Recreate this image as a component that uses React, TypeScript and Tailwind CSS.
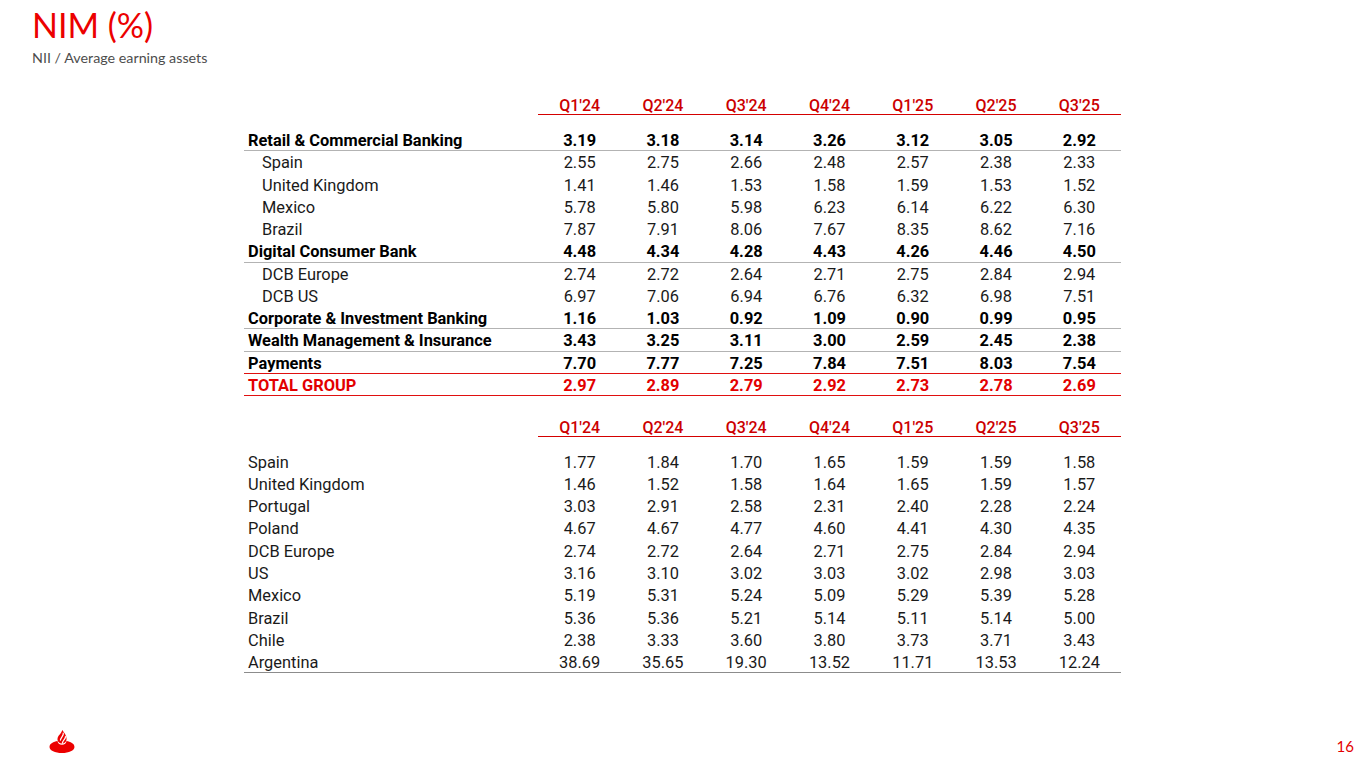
import React from "react";

type Row = { label: string; vals: string[]; kind: "bold" | "sub" | "total" | "plain"; line?: "gray" | "red" | "dark" };

const q = ["Q1'24", "Q2'24", "Q3'24", "Q4'24", "Q1'25", "Q2'25", "Q3'25"];

const t1: Row[] = [
  { label: "Retail & Commercial Banking", vals: ["3.19", "3.18", "3.14", "3.26", "3.12", "3.05", "2.92"], kind: "bold", line: "gray" },
  { label: "Spain", vals: ["2.55", "2.75", "2.66", "2.48", "2.57", "2.38", "2.33"], kind: "sub" },
  { label: "United Kingdom", vals: ["1.41", "1.46", "1.53", "1.58", "1.59", "1.53", "1.52"], kind: "sub" },
  { label: "Mexico", vals: ["5.78", "5.80", "5.98", "6.23", "6.14", "6.22", "6.30"], kind: "sub" },
  { label: "Brazil", vals: ["7.87", "7.91", "8.06", "7.67", "8.35", "8.62", "7.16"], kind: "sub" },
  { label: "Digital Consumer Bank", vals: ["4.48", "4.34", "4.28", "4.43", "4.26", "4.46", "4.50"], kind: "bold", line: "gray" },
  { label: "DCB Europe", vals: ["2.74", "2.72", "2.64", "2.71", "2.75", "2.84", "2.94"], kind: "sub" },
  { label: "DCB US", vals: ["6.97", "7.06", "6.94", "6.76", "6.32", "6.98", "7.51"], kind: "sub" },
  { label: "Corporate & Investment Banking", vals: ["1.16", "1.03", "0.92", "1.09", "0.90", "0.99", "0.95"], kind: "bold", line: "gray" },
  { label: "Wealth Management & Insurance", vals: ["3.43", "3.25", "3.11", "3.00", "2.59", "2.45", "2.38"], kind: "bold", line: "gray" },
  { label: "Payments", vals: ["7.70", "7.77", "7.25", "7.84", "7.51", "8.03", "7.54"], kind: "bold", line: "red" },
  { label: "TOTAL GROUP", vals: ["2.97", "2.89", "2.79", "2.92", "2.73", "2.78", "2.69"], kind: "total", line: "red" },
];

const t2: Row[] = [
  { label: "Spain", vals: ["1.77", "1.84", "1.70", "1.65", "1.59", "1.59", "1.58"], kind: "plain" },
  { label: "United Kingdom", vals: ["1.46", "1.52", "1.58", "1.64", "1.65", "1.59", "1.57"], kind: "plain" },
  { label: "Portugal", vals: ["3.03", "2.91", "2.58", "2.31", "2.40", "2.28", "2.24"], kind: "plain" },
  { label: "Poland", vals: ["4.67", "4.67", "4.77", "4.60", "4.41", "4.30", "4.35"], kind: "plain" },
  { label: "DCB Europe", vals: ["2.74", "2.72", "2.64", "2.71", "2.75", "2.84", "2.94"], kind: "plain" },
  { label: "US", vals: ["3.16", "3.10", "3.02", "3.03", "3.02", "2.98", "3.03"], kind: "plain" },
  { label: "Mexico", vals: ["5.19", "5.31", "5.24", "5.09", "5.29", "5.39", "5.28"], kind: "plain" },
  { label: "Brazil", vals: ["5.36", "5.36", "5.21", "5.14", "5.11", "5.14", "5.00"], kind: "plain" },
  { label: "Chile", vals: ["2.38", "3.33", "3.60", "3.80", "3.73", "3.71", "3.43"], kind: "plain" },
  { label: "Argentina", vals: ["38.69", "35.65", "19.30", "13.52", "11.71", "13.53", "12.24"], kind: "plain", line: "dark" },
];

function Header() {
  return (
    <div className="grid grid-cols-[294px_repeat(7,1fr)] h-[22px]">
      <div />
      {q.map((h) => (
        <div
          key={h}
          className="border-b border-[#d40000] flex items-end justify-center text-[16px] leading-[17px] font-medium text-[#cc0000]"
        >
          {h}
        </div>
      ))}
    </div>
  );
}

function TableRow({ r }: { r: Row }) {
  const lineCls =
    r.line === "gray"
      ? "border-b border-[#b3b3b3]"
      : r.line === "red"
      ? "border-b border-[#e01010]"
      : r.line === "dark"
      ? "border-b border-[#8c8c8c]"
      : "";
  const txt =
    r.kind === "total"
      ? "font-bold text-[#e30000]"
      : r.kind === "bold"
      ? "font-bold text-black"
      : "font-normal text-[#1a1a1a]";
  return (
    <div className={`grid grid-cols-[294px_repeat(7,1fr)] h-[22.27px] pt-[1px] text-[16.4px] leading-[21px] ${lineCls} ${txt}`}>
      <div className={r.kind === "sub" ? "pl-[18px]" : "pl-[4px]"}>{r.label}</div>
      {r.vals.map((v, i) => (
        <div key={i} className="text-center">
          {v}
        </div>
      ))}
    </div>
  );
}

function Logo() {
  return (
    <svg width="26" height="23" viewBox="0 0 25 22">
      <path
        d="M0.5 16.2 C0.5 13 4.5 11.2 8.2 10.6 C8.4 12.6 10 14.2 12.5 14.2 C15 14.2 16.6 12.6 16.8 10.6 C20.5 11.2 24.5 13 24.5 16.2 C24.5 19.6 19.2 22 12.5 22 C5.8 22 0.5 19.6 0.5 16.2 Z"
        fill="#ec0000"
      />
      <path
        d="M12.8 0 C14.8 3 16.9 5.2 16.9 8.6 C16.9 11.2 15 13 12.5 13 C10 13 8.1 11.2 8.1 8.8 C8.1 6.2 10 4.6 11.4 2.8 C12 2 12.5 1 12.8 0 Z"
        fill="#ec0000"
      />
      <path d="M13.7 3 C14.4 5.4 11.2 7 11 9.6" stroke="white" strokeWidth="1.2" fill="none" strokeLinecap="round" />
      <path d="M15.8 6.4 C16 8.8 13.1 10 12.9 12.6" stroke="white" strokeWidth="1.2" fill="none" strokeLinecap="round" />
    </svg>
  );
}

export default function App() {
  return (
    <div
      className="w-[1365px] h-[768px] bg-white overflow-hidden flex flex-col"
      style={{ fontFamily: "Roboto, 'Open Sans', sans-serif" }}
    >
      <div className="pl-[32px] pt-[5px]" style={{ fontFamily: "Lato, sans-serif" }}>
        <div className="text-[34px] leading-[40px] text-[#ec0000]">NIM (%)</div>
        <div className="mt-[4px] text-[14.3px] leading-[18px] text-[#4d4d4d]">NII / Average earning assets</div>
      </div>

      <div className="ml-[244px] w-[877px] mt-[26px]">
        <Header />
        <div className="h-[14px]" />
        {t1.map((r) => (
          <TableRow key={r.label} r={r} />
        ))}
        <div className="h-[18.5px]" />
        <Header />
        <div className="h-[14px]" />
        {t2.map((r) => (
          <TableRow key={r.label} r={r} />
        ))}
      </div>

      <div className="mt-auto flex items-end justify-between pl-[49px] pr-[11px] pb-[13px]">
        <div className="mb-[2px]">
          <Logo />
        </div>
        <div className="text-[15px] leading-[18px] text-[#e30000]" style={{ fontFamily: "Lato, sans-serif" }}>
          16
        </div>
      </div>
    </div>
  );
}
